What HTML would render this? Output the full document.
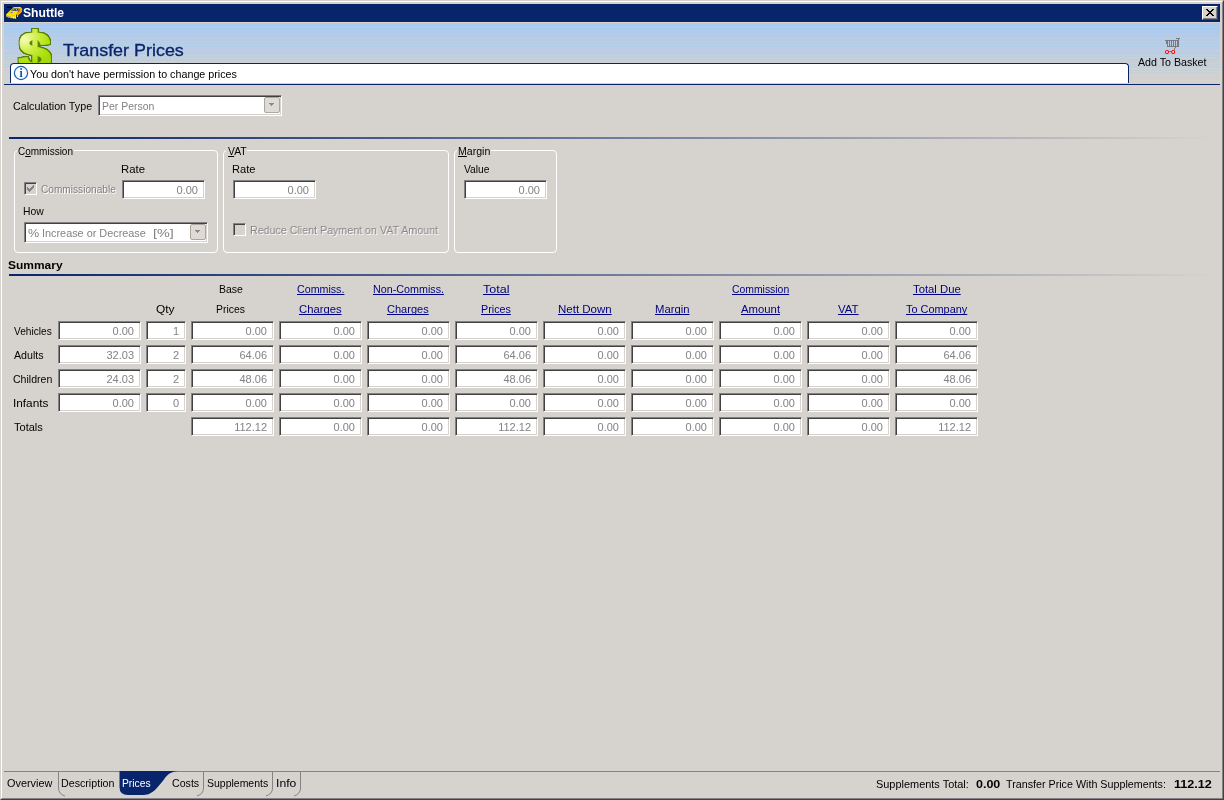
<!DOCTYPE html>
<html><head><meta charset="utf-8"><title>Shuttle</title>
<style>
html,body{margin:0;padding:0}
body{width:1224px;height:800px;overflow:hidden;background:#d6d3ce;position:relative;font:11px/13px "Liberation Sans",sans-serif;color:#000}
div,span{position:absolute;box-sizing:border-box}
.t{transform-origin:0 0;white-space:pre;font:11px/13px "Liberation Sans",sans-serif}
.b{font-weight:bold}
.s17{font:17px/20px "Liberation Sans",sans-serif}
.s12{font:12px/13px "Liberation Sans",sans-serif}
.s12.b{font-weight:bold}
.w{color:#fff}
.nv{color:#08246b}
.g{color:#848284}
.dis{color:#848284;text-shadow:1px 1px 0 #fff}
u{text-decoration:underline;text-underline-offset:1px;text-decoration-skip-ink:none}
.h{width:100px;text-align:center;white-space:pre;letter-spacing:-0.3px}
.lk{color:#000084;text-decoration:underline;text-decoration-skip-ink:none}
.in{height:19px;background:#fff;border:1px solid;border-color:#848284 #fff #fff #848284;box-shadow:inset 1px 1px 0 #424142,inset -1px -1px 0 #d6d3ce;color:#848284;text-align:right;padding:3px 6px 0 0;line-height:13px}
.cb{height:21px;background:#fff;border:1px solid;border-color:#848284 #fff #fff #848284;box-shadow:inset 1px 1px 0 #424142,inset -1px -1px 0 #d6d3ce}
.cb i{position:absolute;box-sizing:border-box;right:1px;top:1px;width:16px;height:16px;border:1px solid #ada69c;border-radius:2px;background:#dedbd6}
.cb i:after{content:"";position:absolute;left:6px;top:7px;width:1px;height:1px;background:#8c8a84;box-shadow:-1px -1px #8c8a84,0 -1px #8c8a84,1px -1px #8c8a84,-2px -2px #8c8a84,-1px -2px #8c8a84,0 -2px #8c8a84,1px -2px #8c8a84,2px -2px #8c8a84}
.gb{border:1px solid #fff;border-radius:4px}
.gl{background:#d6d3ce;height:3px}
.ck{width:13px;height:13px;background:#d6d3ce;border:1px solid;border-color:#848284 #fff #fff #848284;box-shadow:inset 1px 1px 0 #424142,inset -1px -1px 0 #d6d3ce}
.sep{height:2px;background:linear-gradient(to right,#08246b 0%,#d6d3ce 100%)}
#root{left:0;top:0;width:1224px;height:800px;will-change:transform;opacity:.999}
</style></head><body><div id="root">
<!-- window frame -->
<div style="left:0;top:0;width:1224px;height:800px;border:1px solid;border-color:#d6d3ce #424142 #424142 #d6d3ce"></div>
<div style="left:1px;top:1px;width:1222px;height:798px;border:1px solid;border-color:#fff #848284 #848284 #fff"></div>
<!-- title bar -->
<div style="left:4px;top:4px;width:1216px;height:18px;background:#08246b"></div>
<svg style="position:absolute;left:4px;top:4px" width="20" height="18" viewBox="4 4 20 18">
<path d="M6 14.6 L9 11.6 L11.2 9.4 L14 7 L20.6 7 L22.2 9 L21.6 12 L19 14.6 L17.2 16 L16.2 18.6 L13 18.2 L9.4 18 L6.4 16.6 Z" fill="#ffe100"/>
<path d="M18.6 8.4 L20.6 7.2 L22.2 9 L21.6 12 L19 14.6 L17.2 16 L16.4 18 L16.6 13.4 Z" fill="#f4a810"/>
<path d="M14 7 L20.6 7 L19.6 8.4 L13.2 8.4 Z" fill="#ffd21e"/>
<path d="M11 10.4 L13 8.4 L18.8 8.6 L17.2 11 Z" fill="#1d2f7d"/>
<path d="M11.6 10 L13.2 8.6 L15 8.7 L13.6 10.2Z" fill="#8d93a8"/>
<path d="M16 9 L17.2 9 L16.6 10.6 L15.6 10.6Z" fill="#b8b4e0"/>
<path d="M18.6 9 L19.8 8.6 L19.2 11.4 L18 12 Z" fill="#6b4a20"/>
<path d="M10.4 12.2 L12.6 12 L12.8 13 L10.6 13.2Z" fill="#5a6cc0"/>
<path d="M12 15.2 L14.4 15 L14.4 16 L12 16.2Z" fill="#9cc4f4"/>
<path d="M6.2 15 L9.4 16.4 L11.4 17 L11 18.2 L8.6 17.8 L6.4 16.6Z" fill="#b0a890"/>
<path d="M8 16.6 L10.6 17.4 L10.4 18.2 L8.2 17.6Z" fill="#8a8680"/>
<rect x="13" y="17" width="1.2" height="1.4" fill="#fff"/><rect x="15" y="17" width="1" height="1.6" fill="#e8e8e8"/>
<rect x="16.2" y="14.6" width="0.9" height="3.6" fill="#101010"/>
<rect x="17" y="15.6" width="1" height="1.2" fill="#fff"/>
<path d="M7 8 L8 6.6 L9 8 L10 6.6 L11 8 L11.8 8.4" stroke="#000" stroke-width="1" fill="none"/>
</svg>
<!-- close button -->
<div style="left:1202px;top:6px;width:16px;height:14px;background:#d6d3ce;border:1px solid;border-color:#fff #424142 #424142 #fff;box-shadow:inset -1px -1px 0 #848284"></div>
<svg style="position:absolute;left:1206px;top:9px" width="8" height="7" viewBox="0 0 8 7" shape-rendering="crispEdges"><path d="M0 0h2v1h-2zM6 0h2v1h-2zM1 1h2v1h-2zM5 1h2v1h-2zM2 2h4v1h-4zM3 3h2v1h-2zM2 4h4v1h-4zM1 5h2v1h-2zM5 5h2v1h-2zM0 6h2v1h-2zM6 6h2v1h-2z" fill="#000"/></svg>
<!-- header gradient -->
<div style="left:4px;top:23px;width:1216px;height:61px;background:linear-gradient(to bottom,#a5cbf7 0px,#a5cbf7 1px,#adcbef 1px,#adcbef 2px,#a5cbef 2px,#a5cbef 3px,#adcff7 3px,#adcff7 4px,#adcbef 4px,#adcbef 5px,#adcbef 5px,#adcbef 6px,#adcbef 6px,#adcbef 7px,#adcfef 7px,#adcfef 8px,#adcbef 8px,#adcbef 9px,#adcbef 9px,#adcbef 10px,#adcfef 10px,#adcfef 11px,#b5cbe7 11px,#b5cbe7 12px,#adcfef 12px,#adcfef 13px,#b5cbe7 13px,#b5cbe7 14px,#b5cbef 14px,#b5cbef 15px,#b5cfe7 15px,#b5cfe7 16px,#adcfe7 16px,#adcfe7 17px,#b5cbe7 17px,#b5cbe7 18px,#bdcfe7 18px,#bdcfe7 19px,#b5cbe7 19px,#b5cbe7 20px,#b5cfe7 20px,#b5cfe7 21px,#b5cfe7 21px,#b5cfe7 22px,#bdcbe7 22px,#bdcbe7 23px,#b5cfe7 23px,#b5cfe7 24px,#bdcfde 24px,#bdcfde 25px,#bdcbe7 25px,#bdcbe7 26px,#bdcfde 26px,#bdcfde 27px,#bdcfe7 27px,#bdcfe7 28px,#bdcfde 28px,#bdcfde 29px,#bdcfde 29px,#bdcfde 30px,#bdcbde 30px,#bdcbde 31px,#bdcfde 31px,#bdcfde 32px,#c6cfde 32px,#c6cfde 33px,#bdcfde 33px,#bdcfde 34px,#c6cfde 34px,#c6cfde 35px,#c6cfde 35px,#c6cfde 36px,#bdcfde 36px,#bdcfde 37px,#c6cfd6 37px,#c6cfd6 38px,#c6cfde 38px,#c6cfde 39px,#c6cfd6 39px,#c6cfd6 40px,#c6d3de 40px,#c6d3de 41px,#c6cfd6 41px,#c6cfd6 42px,#cecfd6 42px,#cecfd6 43px,#c6cfd6 43px,#c6cfd6 44px,#c6cfd6 44px,#c6cfd6 45px,#ced3d6 45px,#ced3d6 46px,#cecfd6 46px,#cecfd6 47px,#c6cfd6 47px,#c6cfd6 48px,#ced3ce 48px,#ced3ce 49px,#cecfd6 49px,#cecfd6 50px,#cecfd6 50px,#cecfd6 51px,#ced3ce 51px,#ced3ce 52px,#d6cfce 52px,#d6cfce 53px,#ced3d6 53px,#ced3d6 54px,#cecfce 54px,#cecfce 55px,#d6cfce 55px,#d6cfce 56px,#ced3ce 56px,#ced3ce 57px,#d6d3ce 57px,#d6d3ce 58px,#d6cfce 58px,#d6cfce 59px,#d6d3ce 59px,#d6d3ce 60px,#d6cfc6 60px,#d6cfc6 61px)"></div>
<div style="left:4px;top:84px;width:1216px;height:1px;background:#08246b"></div>
<!-- dollar icon -->
<svg style="position:absolute;left:10px;top:23px" width="50" height="40" viewBox="0 0 50 40">
<defs><radialGradient id="dg" gradientUnits="userSpaceOnUse" cx="5" cy="-31" r="38"><stop offset="0" stop-color="#f4fbae"/><stop offset="0.3" stop-color="#cdee45"/><stop offset="0.6" stop-color="#ace00c"/><stop offset="1" stop-color="#98cc04"/></radialGradient><filter id="df" x="-10%" y="-10%" width="120%" height="120%"><feMorphology in="SourceGraphic" operator="dilate" radius="1" result="fat"/><feMorphology in="fat" operator="dilate" radius="1" result="o"/><feGaussianBlur in="o" stdDeviation="0.6" result="ob0"/><feComponentTransfer in="ob0" result="ob"><feFuncA type="linear" slope="2.6" intercept="-0.3"/></feComponentTransfer><feFlood flood-color="#5a8000"/><feComposite in2="ob" operator="in" result="oc"/><feMerge><feMergeNode in="oc"/><feMergeNode in="fat"/></feMerge></filter></defs>
<ellipse cx="21" cy="19.5" rx="3.2" ry="4" fill="#557800"/><ellipse cx="30.4" cy="36.5" rx="3.2" ry="4" fill="#557800"/>
<text x="0" y="0" transform="translate(8.8,47) scale(1.07,1)" font-family="Liberation Sans, sans-serif" font-weight="bold" font-size="54" fill="url(#dg)" filter="url(#df)">$</text>
</svg>
<!-- info box -->
<div style="left:10px;top:63px;width:1119px;height:20px;background:#fff;border:1px solid #08246b;border-bottom:0;border-radius:4px 4px 0 0"></div>
<svg style="position:absolute;left:13px;top:65px" width="16" height="16" viewBox="0 0 16 16">
<circle cx="8" cy="8" r="6.6" fill="#f4faff" stroke="#1a62ac" stroke-width="1.2"/>
<text x="8" y="12" text-anchor="middle" font-family="Liberation Serif, serif" font-weight="bold" font-size="11.5" fill="#12509a">i</text>
</svg>
<!-- cart icon -->
<svg style="position:absolute;left:1164px;top:38px" width="16" height="16" viewBox="0 0 16 16">
<g fill="#7b797b" shape-rendering="crispEdges">
<rect x="12" y="0" width="4" height="1"/><rect x="1" y="2" width="13" height="1"/>
<rect x="2" y="3" width="1" height="3"/><rect x="3" y="3" width="1" height="5"/><rect x="5" y="3" width="1" height="5"/><rect x="7" y="3" width="1" height="5"/><rect x="9" y="3" width="1" height="5"/><rect x="11" y="3" width="1" height="5"/><rect x="13" y="3" width="1" height="5"/>
<rect x="14" y="1" width="1" height="8"/><rect x="3" y="8" width="12" height="1"/>
<rect x="11" y="9" width="1" height="1"/><rect x="10" y="10" width="1" height="2"/><rect x="9" y="12" width="1" height="1"/><rect x="4" y="13" width="5" height="1"/>
</g>
<circle cx="3" cy="14" r="1.5" fill="#fff" stroke="#f00" stroke-width="1.1"/><circle cx="9.2" cy="14" r="1.5" fill="#fff" stroke="#f00" stroke-width="1.1"/>
</svg>
<!-- calc type combo -->
<div class="cb" style="left:98px;top:95px;width:184px"><i></i></div>
<div class="sep" style="left:9px;top:137px;width:1206px"></div>
<!-- group boxes -->
<div class="gb" style="left:14px;top:150px;width:204px;height:103px"></div>
<div class="gl" style="left:17px;top:149px;width:57px"></div>
<div class="gb" style="left:223px;top:150px;width:226px;height:103px"></div>
<div class="gl" style="left:226px;top:149px;width:21px"></div>
<div class="gb" style="left:454px;top:150px;width:103px;height:103px"></div>
<div class="gl" style="left:457px;top:149px;width:34px"></div>
<!-- checkboxes -->
<div class="ck" style="left:24px;top:182px"></div>
<svg style="position:absolute;left:27px;top:185px" width="7" height="7" viewBox="0 0 7 7" shape-rendering="crispEdges"><path d="M0 2h1v3h-1zM1 3h1v3h-1zM2 4h1v3h-1zM3 3h1v3h-1zM4 2h1v3h-1zM5 1h1v3h-1zM6 0h1v3h-1z" fill="#848284"/></svg>
<div class="ck" style="left:233px;top:223px"></div>
<!-- how combo -->
<div class="cb" style="left:24px;top:222px;width:184px"><i></i></div>
<!-- summary sep -->
<div class="sep" style="left:9px;top:274px;width:1206px"></div>
<div class="in" style="left:58px;top:321px;width:83px">0.00</div>
<div class="in" style="left:146px;top:321px;width:40px">1</div>
<div class="in" style="left:191px;top:321px;width:83px">0.00</div>
<div class="in" style="left:279px;top:321px;width:83px">0.00</div>
<div class="in" style="left:367px;top:321px;width:83px">0.00</div>
<div class="in" style="left:455px;top:321px;width:83px">0.00</div>
<div class="in" style="left:543px;top:321px;width:83px">0.00</div>
<div class="in" style="left:631px;top:321px;width:83px">0.00</div>
<div class="in" style="left:719px;top:321px;width:83px">0.00</div>
<div class="in" style="left:807px;top:321px;width:83px">0.00</div>
<div class="in" style="left:895px;top:321px;width:83px">0.00</div>
<div class="in" style="left:58px;top:345px;width:83px">32.03</div>
<div class="in" style="left:146px;top:345px;width:40px">2</div>
<div class="in" style="left:191px;top:345px;width:83px">64.06</div>
<div class="in" style="left:279px;top:345px;width:83px">0.00</div>
<div class="in" style="left:367px;top:345px;width:83px">0.00</div>
<div class="in" style="left:455px;top:345px;width:83px">64.06</div>
<div class="in" style="left:543px;top:345px;width:83px">0.00</div>
<div class="in" style="left:631px;top:345px;width:83px">0.00</div>
<div class="in" style="left:719px;top:345px;width:83px">0.00</div>
<div class="in" style="left:807px;top:345px;width:83px">0.00</div>
<div class="in" style="left:895px;top:345px;width:83px">64.06</div>
<div class="in" style="left:58px;top:369px;width:83px">24.03</div>
<div class="in" style="left:146px;top:369px;width:40px">2</div>
<div class="in" style="left:191px;top:369px;width:83px">48.06</div>
<div class="in" style="left:279px;top:369px;width:83px">0.00</div>
<div class="in" style="left:367px;top:369px;width:83px">0.00</div>
<div class="in" style="left:455px;top:369px;width:83px">48.06</div>
<div class="in" style="left:543px;top:369px;width:83px">0.00</div>
<div class="in" style="left:631px;top:369px;width:83px">0.00</div>
<div class="in" style="left:719px;top:369px;width:83px">0.00</div>
<div class="in" style="left:807px;top:369px;width:83px">0.00</div>
<div class="in" style="left:895px;top:369px;width:83px">48.06</div>
<div class="in" style="left:58px;top:393px;width:83px">0.00</div>
<div class="in" style="left:146px;top:393px;width:40px">0</div>
<div class="in" style="left:191px;top:393px;width:83px">0.00</div>
<div class="in" style="left:279px;top:393px;width:83px">0.00</div>
<div class="in" style="left:367px;top:393px;width:83px">0.00</div>
<div class="in" style="left:455px;top:393px;width:83px">0.00</div>
<div class="in" style="left:543px;top:393px;width:83px">0.00</div>
<div class="in" style="left:631px;top:393px;width:83px">0.00</div>
<div class="in" style="left:719px;top:393px;width:83px">0.00</div>
<div class="in" style="left:807px;top:393px;width:83px">0.00</div>
<div class="in" style="left:895px;top:393px;width:83px">0.00</div>
<div class="in" style="left:191px;top:417px;width:83px">112.12</div>
<div class="in" style="left:279px;top:417px;width:83px">0.00</div>
<div class="in" style="left:367px;top:417px;width:83px">0.00</div>
<div class="in" style="left:455px;top:417px;width:83px">112.12</div>
<div class="in" style="left:543px;top:417px;width:83px">0.00</div>
<div class="in" style="left:631px;top:417px;width:83px">0.00</div>
<div class="in" style="left:719px;top:417px;width:83px">0.00</div>
<div class="in" style="left:807px;top:417px;width:83px">0.00</div>
<div class="in" style="left:895px;top:417px;width:83px">112.12</div>
<div class="in" style="left:122px;top:180px;width:83px">0.00</div>
<div class="in" style="left:233px;top:180px;width:83px">0.00</div>
<div class="in" style="left:464px;top:180px;width:83px">0.00</div>

<!-- bottom bar -->
<div style="left:4px;top:771px;width:1216px;height:1px;background:#848284"></div>
<svg style="position:absolute;left:0;top:771px" width="320" height="27" viewBox="0 0 320 27">
<g fill="none" stroke="#848284" stroke-width="1">
<path d="M58.5 0 V17 Q58.5 23 65 25"/>
<path d="M203.5 0 V17 Q203.5 23 197 25"/>
<path d="M272.5 0 V17 Q272.5 23 266 25"/>
<path d="M300.5 0 V17 Q300.5 23 294 25"/>
</g>
<path d="M119.5 0 H178 C168 1 166 6 162 11 L156 18 C151 23 147 24 142 24 H128 Q119.5 24 119.5 16 Z" fill="#08246b"/>
</svg>
<span class="t w b s12" style="left:23px;top:7px;transform:scaleX(1.010)">Shuttle</span>
<span class="t nv s17" style="left:63px;top:41px;transform:scaleX(1.054);-webkit-text-stroke:.3px #08246b">Transfer Prices</span>
<span class="t" style="left:30px;top:68px;transform:scaleX(0.976)">You don&#x27;t have permission to change prices</span>
<span class="t" style="left:1138px;top:56px;transform:scaleX(0.968)">Add To Basket</span>
<span class="t" style="left:13px;top:100px;transform:scaleX(0.975)">Calculation Type</span>
<span class="t g" style="left:102px;top:100px;transform:scaleX(0.951)">Per Person</span>
<span class="t" style="left:18px;top:145px;transform:scaleX(0.908)">C<u>o</u>mmission</span>
<span class="t" style="left:121px;top:163px;transform:scaleX(1.032)">Rate</span>
<span class="t dis" style="left:41px;top:183px;transform:scaleX(0.920)">Commissionable</span>
<span class="t" style="left:23px;top:205px;transform:scaleX(0.940)">How</span>
<span class="t g" style="left:28px;top:227px;transform:scaleX(1.144)">%</span>
<span class="t g" style="left:42px;top:227px;transform:scaleX(0.987)">Increase or Decrease</span>
<span class="t g" style="left:153px;top:227px;transform:scaleX(1.305)">[%]</span>
<span class="t" style="left:228px;top:145px;transform:scaleX(0.945)"><u>V</u>AT</span>
<span class="t" style="left:232px;top:163px;transform:scaleX(1.009)">Rate</span>
<span class="t dis" style="left:250px;top:224px;transform:scaleX(0.970)">Reduce Client Payment on VAT Amount</span>
<span class="t" style="left:458px;top:145px;transform:scaleX(0.960)"><u>M</u>argin</span>
<span class="t" style="left:464px;top:163px;transform:scaleX(0.935)">Value</span>
<span class="t  b" style="left:8px;top:259px;transform:scaleX(1.089)">Summary</span>
<span class="t" style="left:14px;top:325px;transform:scaleX(0.920)">Vehicles</span>
<span class="t" style="left:14px;top:349px;transform:scaleX(0.970)">Adults</span>
<span class="t" style="left:13px;top:373px;transform:scaleX(0.959)">Children</span>
<span class="t" style="left:13px;top:397px;transform:scaleX(1.073)">Infants</span>
<span class="t" style="left:14px;top:421px;transform:scaleX(1.004)">Totals</span>
<span class="t" style="left:7px;top:777px;transform:scaleX(0.989)">Overview</span>
<span class="t" style="left:61px;top:777px;transform:scaleX(0.970)">Description</span>
<span class="t w" style="left:122px;top:777px;transform:scaleX(0.936)">Prices</span>
<span class="t" style="left:172px;top:777px;transform:scaleX(0.965)">Costs</span>
<span class="t" style="left:207px;top:777px;transform:scaleX(0.953)">Supplements</span>
<span class="t" style="left:276px;top:777px;transform:scaleX(1.105)">Info</span>
<span class="t" style="left:876px;top:778px;transform:scaleX(0.994)">Supplements Total:</span>
<span class="t  b" style="left:976px;top:778px;transform:scaleX(1.135)">0.00</span>
<span class="t" style="left:1006px;top:778px;transform:scaleX(0.975)">Transfer Price With Supplements:</span>
<span class="t  b" style="left:1174px;top:778px;transform:scaleX(1.146)">112.12</span>
<span class="t" style="left:156px;top:303px;transform:scaleX(1.085)">Qty</span>
<span class="t" style="left:219px;top:283px;transform:scaleX(0.954)">Base</span>
<span class="t" style="left:216px;top:303px;transform:scaleX(0.946)">Prices</span>
<span class="t lk" style="left:297px;top:283px;transform:scaleX(0.970)">Commiss.</span>
<span class="t lk" style="left:299px;top:303px;transform:scaleX(1.023)">Charges</span>
<span class="t lk" style="left:373px;top:283px;transform:scaleX(0.976)">Non-Commiss.</span>
<span class="t lk" style="left:387px;top:303px;transform:scaleX(1.003)">Charges</span>
<span class="t lk" style="left:483px;top:283px;transform:scaleX(1.139)">Total</span>
<span class="t lk" style="left:481px;top:303px;transform:scaleX(0.977)">Prices</span>
<span class="t lk" style="left:558px;top:303px;transform:scaleX(1.046)">Nett Down</span>
<span class="t lk" style="left:655px;top:303px;transform:scaleX(1.025)">Margin</span>
<span class="t lk" style="left:732px;top:283px;transform:scaleX(0.945)">Commission</span>
<span class="t lk" style="left:741px;top:303px;transform:scaleX(1.030)">Amount</span>
<span class="t lk" style="left:838px;top:303px;transform:scaleX(1.040)">VAT</span>
<span class="t lk" style="left:913px;top:283px;transform:scaleX(1.026)">Total Due</span>
<span class="t lk" style="left:906px;top:303px;transform:scaleX(0.992)">To Company</span>
</div></body></html>
